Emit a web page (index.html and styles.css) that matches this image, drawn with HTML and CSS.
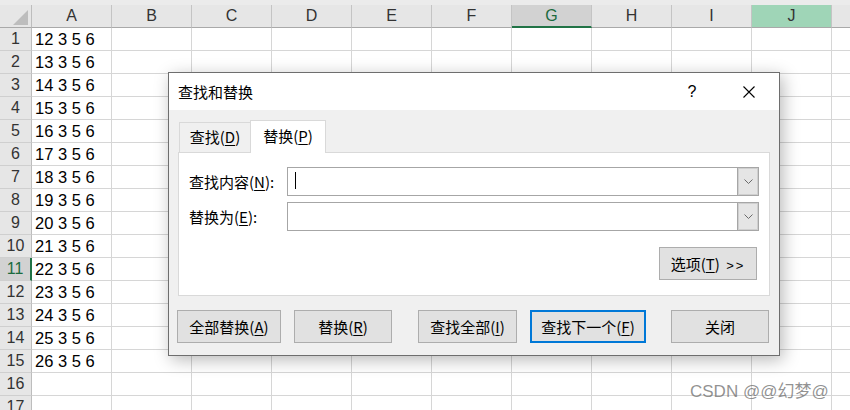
FILE: index.html
```html
<!DOCTYPE html>
<html lang="zh-CN">

<head>
    <meta charset="UTF-8">
    <title>查找和替换</title>
    <link rel="stylesheet" href="styles.css">
</head>

<body>
    <div class="sheet" id="sheet"></div>

    <div class="dialog">
        <div class="dialog-title">
            <span class="title-text">查找和替换</span>
            <span class="help">?</span>
            <span class="close">
                <svg width="12" height="12" viewBox="0 0 12 12">
                    <path d="M0.5 0.5 L11.5 11.5 M11.5 0.5 L0.5 11.5" stroke="#000" stroke-width="1.1" fill="none"/>
                </svg>
            </span>
        </div>

        <div class="dialog-body">
            <div class="tabs">
                <div class="tab tab-find">查找(<u>D</u>)</div>
                <div class="tab tab-replace active">替换(<u>P</u>)</div>
            </div>

            <div class="panel">
                <div class="fields">
                    <div class="field">
                        <label>查找内容(<u>N</u>):</label>
                        <div class="combo">
                            <span class="caret"></span>
                            <span class="drop">
                                <svg width="9" height="5" viewBox="0 0 9 5"><path d="M0.5 0.5 L4.5 4.5 L8.5 0.5" stroke="#6a6a6a" fill="none"/></svg>
                            </span>
                        </div>
                    </div>
                    <div class="field">
                        <label>替换为(<u>E</u>):</label>
                        <div class="combo">
                            <span></span>
                            <span class="drop">
                                <svg width="9" height="5" viewBox="0 0 9 5"><path d="M0.5 0.5 L4.5 4.5 L8.5 0.5" stroke="#6a6a6a" fill="none"/></svg>
                            </span>
                        </div>
                    </div>
                </div>
                <div class="options-row">
                    <button class="btn options">选项(<u>T</u>) <span class="more">&gt;&gt;</span></button>
                </div>
            </div>

            <div class="actions">
                <button class="btn act-all">全部替换(<u>A</u>)</button>
                <button class="btn act-replace">替换(<u>R</u>)</button>
                <button class="btn act-findall">查找全部(<u>I</u>)</button>
                <button class="btn act-next">查找下一个(<u>F</u>)</button>
                <button class="btn act-close">关闭</button>
            </div>
        </div>
    </div>

    <div class="watermark">CSDN @@幻梦@</div>

    <script>
        const sheet = document.getElementById('sheet');
        const letters = ['A', 'B', 'C', 'D', 'E', 'F', 'G', 'H', 'I', 'J', ''];

        function add(cls, text) {
            const d = document.createElement('div');
            d.className = cls;
            d.textContent = text || '';
            sheet.appendChild(d);
        }

        add('top-strip');
        add('corner');
        letters.forEach(l => {
            let cls = 'col-head';
            if (l === 'G') cls += ' sel';
            if (l === 'J') cls += ' hover';
            add(cls, l);
        });

        for (let r = 1; r <= 17; r++) {
            add('row-head' + (r === 11 ? ' sel' : ''), String(r));
            letters.forEach((l, i) => {
                add('cell', i === 0 && r <= 15 ? (11 + r) + ' 3 5 6' : '');
            });
        }
    </script>
</body>

</html>
```

FILE: styles.css
```css
* {
    box-sizing: border-box;
}

body {
    margin: 0;
    width: 850px;
    height: 410px;
    overflow: hidden;
    position: relative;
    background-color: #fff;
    font-family: "Liberation Sans", Arial, sans-serif;
}

/* spreadsheet */
.sheet {
    display: grid;
    grid-template-columns: 32px repeat(11, 80px);
    grid-template-rows: 5px repeat(18, 23px);
}

.top-strip {
    grid-column: 1 / -1;
    background-color: #ebebeb;
}

.corner {
    background-color: #e6e6e6;
    border-right: 1px solid #bdbdbd;
    border-bottom: 1px solid #a9a9a9;
    display: flex;
    justify-content: flex-end;
    align-items: flex-end;
    padding: 0 3px 2px 0;
}

.corner::after {
    content: "";
    width: 15px;
    height: 15px;
    background-color: #bdbdbd;
    clip-path: polygon(100% 0, 100% 100%, 0 100%);
}

.col-head,
.row-head {
    background-color: #e6e6e6;
    display: flex;
    align-items: center;
    justify-content: center;
    font-size: 16px;
    color: #333;
}

.col-head {
    border-right: 1px solid #c4c4c4;
    border-bottom: 1px solid #a9a9a9;
}

.col-head.sel {
    background-color: #d2d2d2;
    border-bottom: 2px solid #217346;
    color: #1b6a3d;
}

.col-head.hover {
    background-color: #9fd5b7;
}

.row-head {
    border-right: 1px solid #bdbdbd;
    border-bottom: 1px solid #cfcfcf;
}

.row-head.sel {
    background-color: #d2d2d2;
    border-right: 2px solid #217346;
    color: #1b6a3d;
}

.cell {
    border-right: 1px solid #d6d6d6;
    border-bottom: 1px solid #d6d6d6;
    display: flex;
    align-items: center;
    padding-left: 3px;
    font-size: 16.5px;
    color: #000;
    white-space: nowrap;
}

/* dialog */
.dialog {
    position: absolute;
    left: 168px;
    top: 72px;
    width: 612px;
    height: 284px;
    border: 1px solid #6e6e6e;
    background-color: #f0f0f0;
    box-shadow: 3px 4px 16px rgba(0, 0, 0, 0.28);
    font-family: "Noto Sans CJK SC", sans-serif;
    font-size: 15px;
    line-height: 1.2;
    color: #000;
}

.dialog u {
    text-underline-offset: 2px;
}

.dialog-title {
    height: 37px;
    background-color: #fff;
    display: flex;
    align-items: center;
    padding: 0 15px 0 9px;
}

.title-text {
    flex: 1;
}

.help {
    width: 30px;
    text-align: center;
    margin-right: 27px;
    font-family: "Liberation Sans", sans-serif;
    font-size: 16px;
}

.close {
    width: 30px;
    display: flex;
    justify-content: center;
}

.dialog-body {
    padding: 10px 0 0 9px;
}

.tabs {
    display: flex;
    align-items: flex-end;
    height: 33px;
    margin: 0 0 -1px 1px;
    position: relative;
    z-index: 1;
}

.tab {
    height: 30px;
    margin-bottom: 1px;
    border: 1px solid #d9d9d9;
    border-bottom: none;
    background-color: #f0f0f0;
    display: flex;
    align-items: center;
    justify-content: center;
    padding-bottom: 1px;
}

.tab-find {
    width: 71px;
    border-right: none;
}

.tab-replace {
    width: 76px;
}

.tab.active {
    height: 33px;
    margin-bottom: 0;
    background-color: #fff;
    padding-bottom: 3px;
}

.panel {
    width: 592px;
    height: 144px;
    background-color: #fff;
    border: 1px solid #d9d9d9;
    padding: 14px 10px 0 10px;
}

.fields {
    display: flex;
    flex-direction: column;
    gap: 6px;
}

.field {
    display: flex;
    align-items: center;
    height: 29px;
}

.field label {
    width: 98px;
}

.combo {
    flex: 1;
    height: 29px;
    border: 1px solid #a6a6a6;
    background-color: #fff;
    display: flex;
    justify-content: space-between;
}

.caret {
    width: 1px;
    height: 17px;
    margin: 4px 0 0 7px;
    background-color: #000;
}

.drop {
    width: 21px;
    border-left: 1px solid #a6a6a6;
    background-color: #e5e5e5;
    box-shadow: inset 0 0 0 1px #cfcfcf;
    display: flex;
    align-items: center;
    justify-content: center;
}

.options-row {
    display: flex;
    justify-content: flex-end;
    margin: 16px 2px 0 0;
}

.btn {
    height: 33px;
    padding: 0;
    margin: 0;
    background-color: #e1e1e1;
    border: 1px solid #adadad;
    font-family: inherit;
    font-size: 15px;
    color: #000;
}

.options {
    width: 98px;
}

.more {
    font-family: "Liberation Sans", sans-serif;
    font-size: 13px;
    letter-spacing: 2px;
    margin-left: 3px;
}

.actions {
    display: flex;
    margin-top: 14px;
}

.actions .act-all {
    width: 104px;
    margin-left: -1px;
}

.actions .act-replace {
    width: 98px;
    margin-left: 13px;
}

.actions .act-findall {
    width: 99px;
    margin-left: 26px;
}

.actions .act-next {
    width: 116px;
    margin-left: 13px;
    border: 2px solid #0078d7;
}

.actions .act-close {
    width: 98px;
    margin-left: 25px;
}

.watermark {
    position: absolute;
    left: 690px;
    top: 381px;
    font-family: "Liberation Sans", "Noto Sans CJK SC", sans-serif;
    font-size: 17px;
    line-height: 22px;
    color: rgba(110, 110, 110, 0.75);
}
```
